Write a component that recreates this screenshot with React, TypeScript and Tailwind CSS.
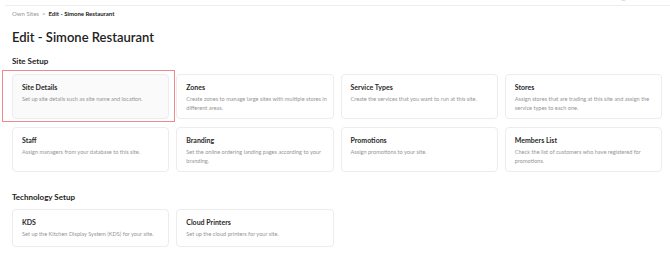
import type { ReactNode } from 'react';

type Tile = { title: string; text: string; active?: boolean };

const siteSetup: Tile[] = [
  { title: 'Site Details', text: 'Set up site details such as site name and location.', active: true },
  { title: 'Zones', text: 'Create zones to manage large sites with multiple stores in different areas.' },
  { title: 'Service Types', text: 'Create the services that you want to run at this site.' },
  { title: 'Stores', text: 'Assign stores that are trading at this site and assign the service types to each one.' },
  { title: 'Staff', text: 'Assign managers from your database to this site.' },
  { title: 'Branding', text: 'Set the online ordering landing pages according to your branding.' },
  { title: 'Promotions', text: 'Assign promotions to your site.' },
  { title: 'Members List', text: 'Check the list of customers who have registered for promotions.' },
];

const techSetup: Tile[] = [
  { title: 'KDS', text: 'Set up the Kitchen Display System (KDS) for your site.' },
  { title: 'Cloud Printers', text: 'Set up the cloud printers for your site.' },
];

function SetupCard({ tile, tall }: { tile: Tile; tall: boolean }) {
  return (
    <div
      className={`relative rounded-[4px] border border-[#ececec] pl-[9px] pr-[4px] pt-[8px] ${tall ? 'h-[45px]' : 'h-[38px]'} ${tile.active ? 'bg-[#fafafa]' : 'bg-white'}`}
    >
      <div className="text-[7px] font-bold leading-[9px] text-[#2a2a2a]">{tile.title}</div>
      <p className="mt-[3px] text-[5.6px] leading-[8.5px] text-[#959595]">{tile.text}</p>
      {tile.active && (
        <div className="pointer-events-none absolute left-[-11px] top-[-5px] right-[-7px] bottom-[-4px] border-[1.5px] border-[#ef8a8a]" />
      )}
    </div>
  );
}

function Section({ label, children }: { label: string; children: ReactNode }) {
  return (
    <div>
      <h2 className="text-[8px] font-bold leading-[10px] text-[#222]">{label}</h2>
      {children}
    </div>
  );
}

export default function App() {
  return (
    <div className="h-[275px] w-[670px] overflow-hidden bg-white" style={{ fontFamily: 'Lato, "Noto Sans", sans-serif' }}>
      <div className="relative h-[6px] border-b border-[#eeeeee] ml-[5px]">
        <div className="absolute right-[44px] top-[-3px] h-[4px] w-[5px] rounded-full bg-[#dddddd]" />
      </div>
      <div className="pl-[12px] pr-[8px]">
        <div className="mt-[4px] flex items-center gap-[3px] text-[6px] leading-[8px]">
          <span className="text-[#9a9a9a]">Own Sites</span>
          <span className="text-[#9a9a9a]">&gt;</span>
          <span className="font-bold text-[#222]">Edit - Simone Restaurant</span>
        </div>
        <h1 className="mt-[11px] text-[13px] font-semibold leading-[16px] text-[#222]">Edit - Simone Restaurant</h1>

        <div className="mt-[11px]">
          <Section label="Site Setup">
            <div className="mt-[8px] grid grid-cols-4 gap-x-[7px] gap-y-[8px]">
              {siteSetup.map((t) => (
                <SetupCard key={t.title} tile={t} tall />
              ))}
            </div>
          </Section>
        </div>

        <div className="mt-[20px]">
          <Section label="Technology Setup">
            <div className="mt-[7px] grid grid-cols-4 gap-x-[7px]">
              {techSetup.map((t) => (
                <SetupCard key={t.title} tile={t} tall={false} />
              ))}
            </div>
          </Section>
        </div>
      </div>
    </div>
  );
}
